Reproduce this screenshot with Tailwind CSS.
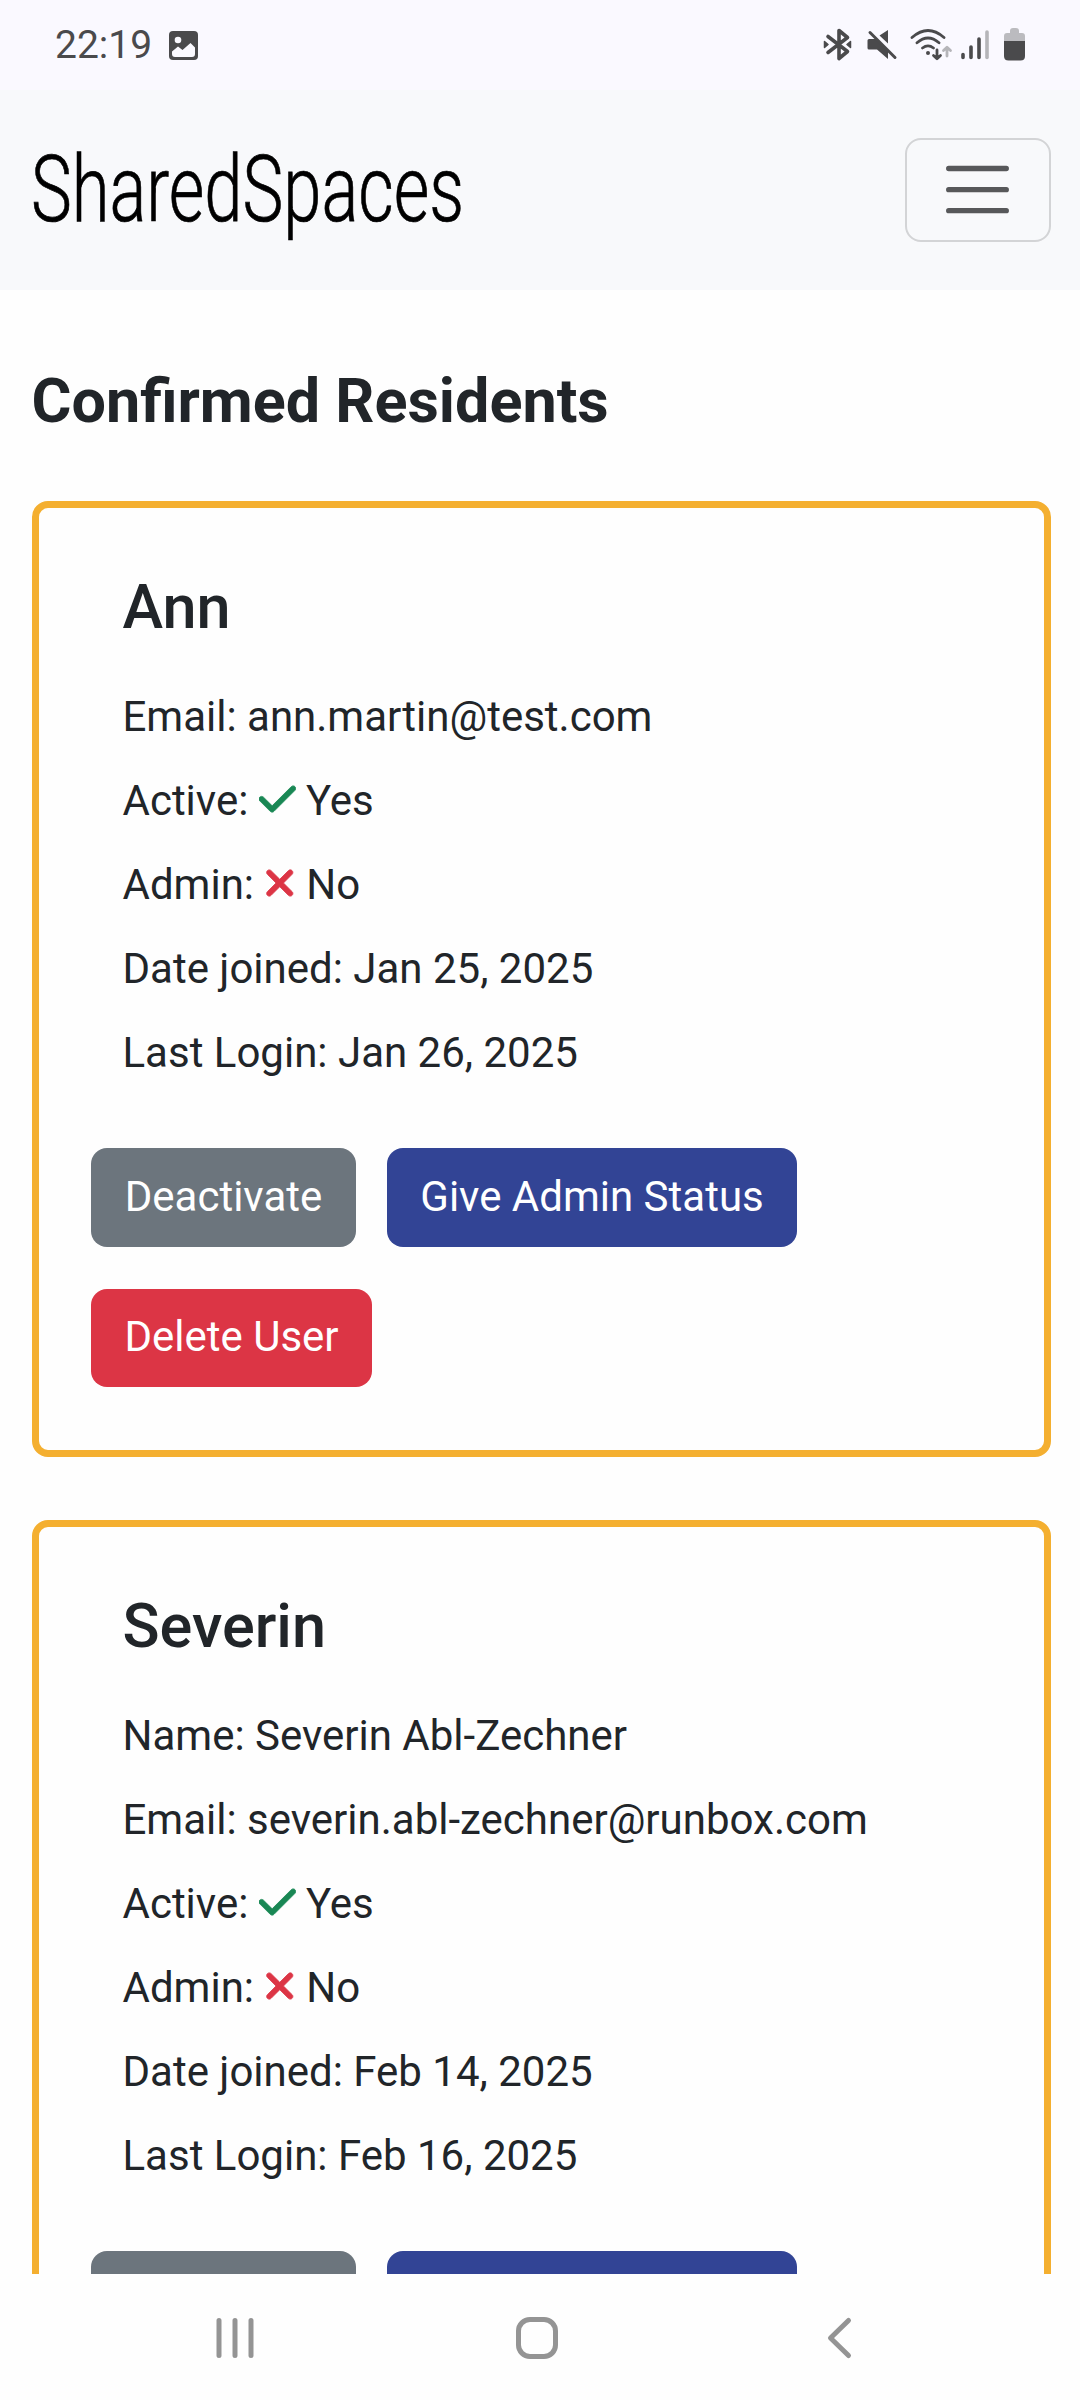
<!DOCTYPE html>
<html lang="en">
<head>
<meta charset="utf-8">
<title>SharedSpaces</title>
<script src="https://cdn.jsdelivr.net/npm/@tailwindcss/browser@4"></script>
</head>
<body class="w-[1080px] h-[2400px] overflow-hidden bg-[#fefefe] font-['Roboto',sans-serif] text-[#212529] flex flex-col">
<svg class="hidden">
  <symbol id="check" viewBox="0 0 448 512" overflow="visible"><path d="M438.6 105.4c12.5 12.5 12.5 32.8 0 45.3l-256 256c-12.5 12.5-32.8 12.5-45.3 0l-128-128c-12.5-12.5-12.5-32.8 0-45.3s32.8-12.5 45.3 0L160 338.7 393.4 105.4c12.5-12.5 32.8-12.5 45.3 0z" fill="currentColor" stroke="currentColor" stroke-width="10"/></symbol>
  <symbol id="xmark" viewBox="0 0 384 512" overflow="visible"><path d="M342.6 150.6c12.5-12.5 12.5-32.8 0-45.3s-32.8-12.5-45.3 0L192 210.7 86.6 105.4c-12.5-12.5-32.8-12.5-45.3 0s-12.5 32.8 0 45.3L146.7 256 41.4 361.4c-12.5 12.5-12.5 32.8 0 45.3s32.8 12.5 45.3 0L192 301.3 297.4 406.6c12.5 12.5 32.8 12.5 45.3 0s12.5-32.8 0-45.3L237.3 256 342.6 150.6z" fill="currentColor" stroke="currentColor" stroke-width="10"/></symbol>
</svg>

<!-- status bar -->
<div class="h-[90px] shrink-0 bg-[#faf9ff] flex items-center justify-between pl-[55px] pr-[54px] text-[#4a4a4c]">
  <div class="flex items-center">
    <span class="w-[114px] text-[39px] leading-[46px]">22:19</span>
    <svg class="w-[29px] h-[29px]" viewBox="0 0 29 29"><rect width="29" height="29" rx="4" fill="currentColor"/><circle cx="9" cy="9" r="3.3" fill="#faf9ff"/><path d="M3 20.500L9 15.500l4.500 3.500L21.500 12l4.500 4.500V23a3 3 0 0 1-3 3H6a3 3 0 0 1-3-3z" fill="#faf9ff"/></svg>
  </div>
  <svg class="w-[204px] h-[36px]" viewBox="822 27 204 36" fill="none" stroke="currentColor" stroke-linecap="round" stroke-linejoin="round">
    <path d="M828 36.500L847.500 51.500L839 58.500V30.500L847.500 37.500L828 52.500" stroke-width="3.600"/>
    <path d="M824.500 41.500v6l3.500-3zM850.500 41.500v6l-3.500-3z" fill="currentColor" stroke-width="1.500"/>
    <path d="M869 39h7l12 12v8l-11-9.500h-8a1.500 1.500 0 0 1-1.500-1.500v-7.500a1.500 1.500 0 0 1 1.500-1.500zM888 30v13.500l-8.500-8z" fill="currentColor" stroke="none"/>
    <path d="M870 32.500L895 57.500" stroke-width="3"/>
    <g stroke-width="2.800"><path d="M912 37.500q16-14 32 0M917 42.800q11-9.500 22 0M922.500 48q5.500-4.300 11 0"/><path d="M937 50v8.500M933.500 55.500l3.500 3.300l3.500-3.300"/></g>
    <path d="M947 56V47.500M943.500 50.500l3.500-3.300l3.500 3.300" stroke="#b5b5b9" stroke-width="2.800"/>
    <circle cx="928" cy="53" r="2" fill="currentColor" stroke="none"/>
    <g stroke-width="3.600"><path d="M963 54.500v3M971 47v10.500M979 39v18.500"/><path d="M987 32v25.500" stroke="#b5b5b9"/></g>
    <g stroke="none"><path d="M1004 41v-5q0-3 3-3h3v-2q0-3 3-3h3q3 0 3 3v2h3q3 0 3 3v5z" fill="#bbbbbf"/><path d="M1004 41h21v15q0 4.500-4.500 4.500h-12q-4.500 0-4.500-4.500z" fill="currentColor"/></g>
  </svg>
</div>

<!-- navbar -->
<header class="h-[200px] shrink-0 bg-[#f8f9fb] flex items-center justify-between pl-8 pr-[29px]">
  <svg class="w-[440px] h-[120px] overflow-visible" viewBox="32 130 440 120"><text x="31" y="221" textLength="433" lengthAdjust="spacingAndGlyphs" class="font-['Roboto'] font-light text-[92px]" fill="#000" stroke="#000" stroke-width=".7">SharedSpaces</text></svg>
  <button class="w-[146px] h-[104px] rounded-2xl border-2 border-[#d3d4d6] flex items-center justify-center pr-[2px]" aria-label="Menu">
    <svg class="w-[63px] h-[50px]" viewBox="0 0 63 50" stroke="#57585a" stroke-width="5.300" stroke-linecap="round"><path d="M2.700 3.500h57.600M2.700 24.700h57.600M2.700 45.700h57.600"/></svg>
  </button>
</header>

<main class="flex-1 min-h-0 overflow-hidden pl-[31.5px] pr-[29px] pt-[73px]">
  <h1 class="text-[61.1px] leading-[76px] font-bold">Confirmed Residents</h1>

  <section class="ml-[0.5px] mt-[62px] border-[7px] border-[#f4af30] rounded-2xl px-[52px] pt-[61px] pb-[63px]">
    <div class="pl-[31.5px]">
      <h2 class="text-[61.2px] leading-[76px] font-medium">Ann</h2>
      <div class="mt-10 flex flex-col gap-[21px] text-[42px] leading-[63px]">
        <p>Email: ann.martin@test.com</p>
        <p>Active: <svg class="inline w-[36.75px] h-[42px] align-[-0.125em] text-[#198754]"><use href="#check"/></svg> Yes</p>
        <p>Admin: <svg class="inline w-[31.5px] h-[42px] align-[-0.125em] text-[#dc3545]"><use href="#xmark"/></svg> No</p>
        <p>Date joined: Jan 25, 2025</p>
        <p>Last Login: Jan 26, 2025</p>
      </div>
    </div>
    <div class="mt-16 flex flex-wrap gap-x-[31px] gap-y-[42px] text-[42px] leading-[63px] text-white">
      <button class="w-[265px] h-[99px] pb-[3px] rounded-2xl bg-[#6c757d]">Deactivate</button>
      <button class="w-[410px] h-[99px] pb-[3px] rounded-2xl bg-[#324495]">Give Admin Status</button>
      <button class="w-[281px] h-[98px] pb-[3px] rounded-2xl bg-[#dc3545]">Delete User</button>
    </div>
  </section>

  <section class="ml-[0.5px] mt-[63px] border-[7px] border-[#f4af30] rounded-2xl px-[52px] pt-[61px] pb-[63px]">
    <div class="pl-[31.5px]">
      <h2 class="text-[61.2px] leading-[76px] font-medium">Severin</h2>
      <div class="mt-10 flex flex-col gap-[21px] text-[42px] leading-[63px]">
        <p>Name: Severin Abl-Zechner</p>
        <p>Email: severin.abl-zechner@runbox.com</p>
        <p>Active: <svg class="inline w-[36.75px] h-[42px] align-[-0.125em] text-[#198754]"><use href="#check"/></svg> Yes</p>
        <p>Admin: <svg class="inline w-[31.5px] h-[42px] align-[-0.125em] text-[#dc3545]"><use href="#xmark"/></svg> No</p>
        <p>Date joined: Feb 14, 2025</p>
        <p>Last Login: Feb 16, 2025</p>
      </div>
    </div>
    <div class="mt-16 flex flex-wrap gap-x-[31px] text-[42px] leading-[63px] text-white">
      <div class="w-[265px] h-[98px] rounded-2xl bg-[#6c757d]"></div>
      <div class="w-[410px] h-[98px] rounded-2xl bg-[#324495]"></div>
    </div>
  </section>
</main>

<!-- system navigation -->
<nav class="h-[126px] shrink-0 bg-[#fefefe]">
  <svg class="w-[1080px] h-[126px]" viewBox="0 2274 1080 126" fill="none" stroke="#949494" stroke-width="5" stroke-linecap="round" stroke-linejoin="round">
    <path d="M219 2320.500v35M235 2320.500v35M251 2320.500v35"/>
    <rect x="518.500" y="2319.500" width="37" height="37" rx="11.500"/>
    <path d="M848.500 2320.500L830.500 2338l18 17.500"/>
  </svg>
</nav>
</body>
</html>
